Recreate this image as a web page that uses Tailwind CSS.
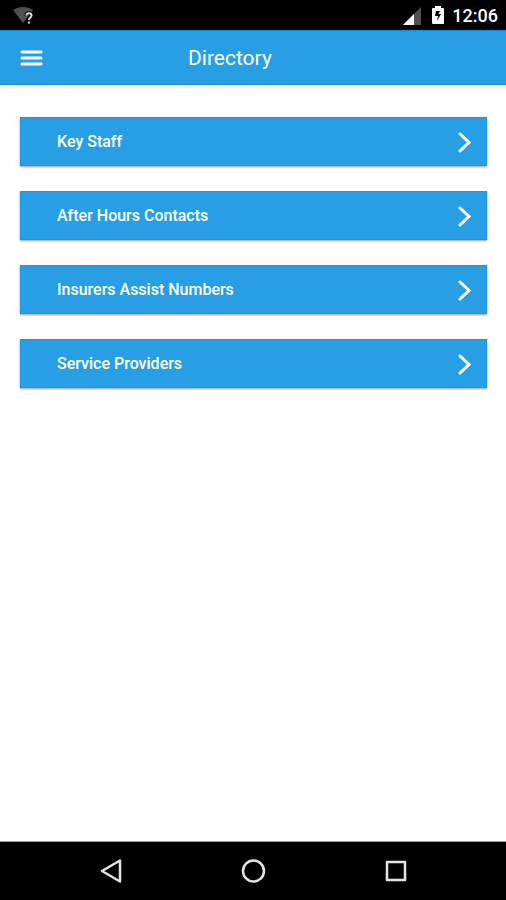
<!DOCTYPE html>
<html lang="en">
  <head>
    <meta charset="utf-8" />
    <meta name="viewport" content="width=device-width, initial-scale=1.0" />
    <title>Directory</title>
    <script src="https://cdn.jsdelivr.net/npm/@tailwindcss/browser@4"></script>
  </head>
  <body class="flex flex-col min-h-screen bg-white font-[Roboto,sans-serif]">
    <!-- Status bar -->
    <div class="flex items-center justify-between h-[30px] bg-black text-white pl-3 pr-2 pt-px">
      <svg class="w-6 h-5" viewBox="0 0 24 20" fill="none" aria-label="Wi-Fi">
        <path d="M1 4C7 0 15 0 21 4L11 17Z" fill="#505050" />
        <path d="M14.5 9.5C14.5 6.5 19.5 6.5 19.5 9.5C19.5 11.5 17 11.5 17 14M17 15.5V17.5" stroke="#000" stroke-width="4" />
        <path d="M14.5 9.5C14.5 6.5 19.5 6.5 19.5 9.5C19.5 11.5 17 11.5 17 14M17 15.5V17.5" stroke="#ddd" stroke-width="2" />
      </svg>
      <div class="flex items-center">
        <svg class="w-5 h-5" viewBox="0 0 20 20" aria-label="Signal">
          <path d="M19 1V19H1Z" fill="#505050" />
          <path d="M12 8V19H1Z" fill="#fff" />
        </svg>
        <svg class="w-4 h-5 ml-2" viewBox="0 0 16 20" aria-label="Battery charging">
          <path d="M5 0H11V2H13Q14 2 14 3V17Q14 18 13 18H3Q2 18 2 17V3Q2 2 3 2H5Z" fill="#fff" />
          <path d="M10 5H6L5 10H8L7 15L11 8H8.5Z" fill="#000" />
        </svg>
        <span class="ml-1.5 text-lg font-medium leading-5">12:06</span>
      </div>
    </div>

    <header class="grid grid-cols-[168px_1fr] items-center h-[55px] bg-[#289fe4] border-y border-[#128fd6] text-white px-5">
      <button type="button" aria-label="Menu" class="w-6">
        <svg class="w-6 h-5" viewBox="0 0 24 20" stroke="#fff" stroke-width="3" stroke-linecap="round">
          <path d="M2 4H21M2 10H21M2 16H21" />
        </svg>
      </button>
      <h1 class="text-[21px] leading-6">Directory</h1>
    </header>

    <main class="flex-1 pl-5 pr-[19px] pt-8">
      <ul class="flex flex-col gap-[25px]">
        <li>
          <a href="#" class="flex items-center justify-between h-[49px] bg-[#289fe4] border border-[#1c97de] shadow-[0_1px_2px_rgba(0,0,0,0.4)] text-white text-base font-medium pl-9 pr-[11px]">
            Key Staff
            <svg class="w-5 h-6" viewBox="0 0 20 24" fill="none" stroke="#fff" stroke-width="3" stroke-linecap="round"><path d="M5 4L14 12.5L5 21" /></svg>
          </a>
        </li>
        <li>
          <a href="#" class="flex items-center justify-between h-[49px] bg-[#289fe4] border border-[#1c97de] shadow-[0_1px_2px_rgba(0,0,0,0.4)] text-white text-base font-medium pl-9 pr-[11px]">
            After Hours Contacts
            <svg class="w-5 h-6" viewBox="0 0 20 24" fill="none" stroke="#fff" stroke-width="3" stroke-linecap="round"><path d="M5 4L14 12.5L5 21" /></svg>
          </a>
        </li>
        <li>
          <a href="#" class="flex items-center justify-between h-[49px] bg-[#289fe4] border border-[#1c97de] shadow-[0_1px_2px_rgba(0,0,0,0.4)] text-white text-base font-medium pl-9 pr-[11px]">
            Insurers Assist Numbers
            <svg class="w-5 h-6" viewBox="0 0 20 24" fill="none" stroke="#fff" stroke-width="3" stroke-linecap="round"><path d="M5 4L14 12.5L5 21" /></svg>
          </a>
        </li>
        <li>
          <a href="#" class="flex items-center justify-between h-[49px] bg-[#289fe4] border border-[#1c97de] shadow-[0_1px_2px_rgba(0,0,0,0.4)] text-white text-base font-medium pl-9 pr-[11px]">
            Service Providers
            <svg class="w-5 h-6" viewBox="0 0 20 24" fill="none" stroke="#fff" stroke-width="3" stroke-linecap="round"><path d="M5 4L14 12.5L5 21" /></svg>
          </a>
        </li>
      </ul>
    </main>

    <!-- Android navigation -->
    <nav class="flex items-center justify-center gap-[114px] h-[59px] bg-black border-t border-gray-400">
      <button type="button" aria-label="Back">
        <svg class="w-7 h-7" viewBox="0 0 28 28" fill="none" stroke="#e4e4e4" stroke-width="2.5" stroke-linejoin="round"><path d="M23 3.5V24.5L5 14Z" /></svg>
      </button>
      <button type="button" aria-label="Home">
        <svg class="w-7 h-7" viewBox="0 0 28 28" fill="none" stroke="#e4e4e4" stroke-width="2.5"><circle cx="14.5" cy="14" r="10.5" /></svg>
      </button>
      <button type="button" aria-label="Recent apps">
        <svg class="w-7 h-7" viewBox="0 0 28 28" fill="none" stroke="#e4e4e4" stroke-width="2.5" stroke-linejoin="round"><path d="M6 5H24V23H6Z" /></svg>
      </button>
    </nav>
  </body>
</html>
